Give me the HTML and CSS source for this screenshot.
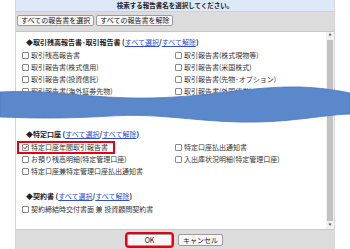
FILE: index.html
```html
<!DOCTYPE html>
<html lang="ja">
<head>
    <meta charset="UTF-8">
    <title>報告書選択</title>
    <link rel="stylesheet" href="styles.css">
</head>
<body>
    <div class="page">
        <div class="dialog">
            <div class="dlg-title">検索する報告書名を選択してください。</div>
            <div class="toolbar">
                <button class="btn">すべての報告書を選択</button>
                <button class="btn">すべての報告書を解除</button>
            </div>
            <div class="body">
                <div class="list">
                    <div class="group">
                        <div class="group-head">◆取引残高報告書･取引報告書 (<a href="#">すべて選択</a>/<a href="#">すべて解除</a>)</div>
                        <div class="items">
                            <div class="item"><span class="cb"></span>取引残高報告書</div>
                            <div class="item"><span class="cb"></span>取引報告書(株式現物等)</div>
                            <div class="item"><span class="cb"></span>取引報告書(株式信用)</div>
                            <div class="item"><span class="cb"></span>取引報告書(米国株式)</div>
                            <div class="item"><span class="cb"></span>取引報告書(投資信託)</div>
                            <div class="item"><span class="cb"></span>取引報告書(先物･オプション)</div>
                            <div class="item"><span class="cb"></span>取引報告書(海外証券先物)</div>
                            <div class="item"><span class="cb"></span>取引報告書(外国債券)</div>
                        </div>
                        <div class="omitted"></div>
                    </div>
                    <div class="group">
                        <div class="group-head">◆特定口座 (<a href="#">すべて選択</a>/<a href="#">すべて解除</a>)</div>
                        <div class="items">
                            <div class="item hl"><span class="cb checked"><svg viewBox="0 0 5 5" width="5" height="5"><path d="M0.8 2.5 L2 3.8 L4.3 1" fill="none" stroke="#333" stroke-width="0.9"/></svg></span>特定口座年間取引報告書</div>
                            <div class="item"><span class="cb"></span>特定口座払出通知書</div>
                            <div class="item"><span class="cb"></span>お預り残高明細(特定管理口座)</div>
                            <div class="item"><span class="cb"></span>入出庫状況明細(特定管理口座)</div>
                            <div class="item"><span class="cb"></span>特定口座兼特定管理口座払出通知書</div>
                        </div>
                    </div>
                    <div class="group">
                        <div class="group-head">◆契約書 (<a href="#">すべて選択</a>/<a href="#">すべて解除</a>)</div>
                        <div class="items">
                            <div class="item wide"><span class="cb"></span>契約締結時交付書面 兼 投資顧問契約書</div>
                        </div>
                    </div>
                </div>
                <div class="scrollbar">
                    <div class="sb-arrow">▲</div>
                    <div class="sb-thumb"></div>
                    <div class="sb-arrow">▼</div>
                </div>
            </div>
            <div class="footer">
                <button class="fbtn ok">OK</button>
                <button class="fbtn">キャンセル</button>
            </div>
        </div>

        <!-- cut mark: part of the list is left out -->
        <svg class="wave" viewBox="0 0 350 45" width="350" height="45">
            <path d="M0 8 C50 5 90 15 150 14 C210 13 250 2 300 3 C325 4 340 7 350 9 L350 30 C320 31 290 39 240 38 C190 37 160 29 110 32 C60 35 30 34 0 33 Z" fill="#5b87cb" stroke="#4b77c2" stroke-width="0.8"/>
        </svg>
    </div>
</body>
</html>
```

FILE: styles.css
```css
body {
    margin: 0;
    background-color: #fff;
    font-family: "Noto Sans CJK JP", "Noto Sans", sans-serif;
    color: #222;
}
.page {
    position: relative;
    width: 350px;
    height: 249px;
    overflow: hidden;
}
.dialog {
    margin-left: 15px;
    width: 318px;
    height: 249px;
    border-left: 1px solid #d4d4d4;
    border-right: 1px solid #d4d4d4;
    display: flex;
    flex-direction: column;
}
.dlg-title {
    height: 11px;
    line-height: 11px;
    background-color: #dde9f9;
    border-bottom: 1px solid #c9d3de;
    text-align: center;
    font-size: 6.5px;
    font-weight: bold;
}
.toolbar {
    height: 20px;
    box-sizing: border-box;
    background-color: #dcdcdc;
    border-bottom: 1px solid #c6c6c6;
    display: flex;
    gap: 2px;
    padding: 3px 0 0 1px;
}
.btn {
    height: 11px;
    padding: 0 3px;
    font-family: inherit;
    font-size: 7px;
    line-height: 9px;
    color: #222;
    background-color: #f7f7f7;
    border: 1px solid #9c9c9c;
    border-radius: 2px;
}
.body {
    height: 197px;
    display: flex;
    background-color: #fff;
}
.list {
    flex: 1;
    padding: 4px 0 0 6px;
    font-size: 7px;
}
.group {
    margin-bottom: 13px;
}
.group-head {
    height: 12px;
    line-height: 12px;
    padding-left: 4px;
    margin-bottom: 1px;
    font-weight: 600;
}
.group-head a {
    color: #2f4fd0;
    font-weight: normal;
    text-decoration: underline;
}
.items {
    display: grid;
    grid-template-columns: 153px 1fr;
}
.item {
    position: relative;
    display: flex;
    align-items: center;
    gap: 2px;
    height: 12px;
    white-space: nowrap;
    color: #333;
}
.item.wide {
    grid-column: span 2;
}
.cb {
    width: 5px;
    height: 5px;
    border: 1px solid #8a8a8a;
    border-radius: 1px;
    background-color: #fff;
    display: flex;
}
.item.hl::after {
    content: "";
    position: absolute;
    left: -5px;
    top: 0;
    width: 98px;
    height: 13px;
    border: 2px solid #e60012;
    box-sizing: border-box;
}
.omitted {
    height: 18px;
}
.scrollbar {
    width: 8px;
    display: flex;
    flex-direction: column;
    background-color: #f1f1f1;
}
.sb-arrow {
    height: 7px;
    line-height: 7px;
    font-size: 3px;
    text-align: center;
    color: #555;
}
.sb-thumb {
    flex: 1;
    margin: 1px 1px;
    background-color: #c2c2c2;
}
.footer {
    height: 20px;
    box-sizing: border-box;
    background-color: #dcdcdc;
    border-top: 1px solid #cacaca;
    display: flex;
    justify-content: center;
    gap: 6px;
    padding-top: 4px;
}
.fbtn {
    width: 45px;
    height: 12px;
    padding: 0;
    font-family: inherit;
    font-size: 7px;
    line-height: 10px;
    color: #222;
    background-color: #f7f7f7;
    border: 1px solid #9c9c9c;
    border-radius: 2px;
}
.fbtn.ok {
    outline: 2px solid #e60012;
}
.wave {
    position: absolute;
    left: 0;
    top: 84px;
}
```
